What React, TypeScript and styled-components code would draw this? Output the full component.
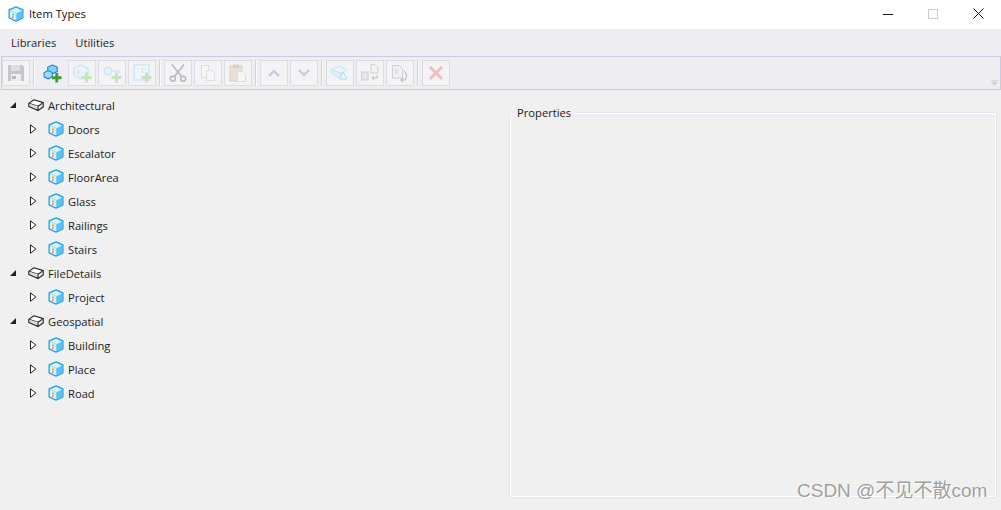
import React from "react";
import styled, { createGlobalStyle } from "styled-components";

const GlobalStyle = createGlobalStyle`
  html, body {
    margin: 0;
    padding: 0;
    background: #f0f0f0;
  }
  body {
    font-family: "Open Sans", "Noto Sans", sans-serif;
    font-size: 11.2px;
    color: #1a1a1a;
  }
`;

const Window = styled.div`
  position: relative;
  width: 1001px;
  height: 510px;
  overflow: hidden;
  display: flex;
  flex-direction: column;
  background: #f0f0f0;
`;

const TitleBar = styled.div`
  height: 29px;
  flex: none;
  box-sizing: border-box;
  padding: 0 0 2px 8px;
  background: #fff;
  display: flex;
  align-items: center;
`;

const TitleText = styled.span`
  margin-left: 5px;
  font-size: 11.2px;
  color: #111;
`;

const WindowButtons = styled.div`
  margin-left: auto;
  display: flex;
  align-items: center;
  height: 100%;
`;

const WindowButton = styled.div`
  width: 45px;
  height: 100%;
  display: flex;
  align-items: center;
  justify-content: center;

  &:last-child {
    width: 46px;
    box-sizing: border-box;
    padding-left: 1px;
  }
`;

const MenuBar = styled.div`
  height: 27px;
  flex: none;
  background: #eeedf2;
  display: flex;
  align-items: center;
  padding-left: 11px;
  gap: 19px;
`;

const MenuItem = styled.span`
  font-size: 11.2px;
  color: #1e1e1e;
`;

const ToolbarRow = styled.div`
  height: 34px;
  flex: none;
  box-sizing: border-box;
  margin-left: 1px;
  background: #eeedf2;
  border: 1px solid #ccc9e0;
  display: flex;
  align-items: center;
  gap: 2px;
  position: relative;
`;

const ToolButton = styled.div<{ $plain?: boolean }>`
  width: 28px;
  height: 26px;
  box-sizing: border-box;
  flex: none;
  display: flex;
  align-items: center;
  justify-content: center;
  background: ${(p) => (p.$plain ? "transparent" : "#f3f3f5")};
  border: 1px solid ${(p) => (p.$plain ? "transparent" : "#dddce6")};
`;

const Separator = styled.div`
  width: 2px;
  height: 26px;
  flex: none;
  margin: 0 1px;
  background: linear-gradient(to right, #d4d2e2 50%, #fafafa 50%);
`;

const Overflow = styled.svg`
  position: absolute;
  right: 2px;
  bottom: 3px;
`;

const Body = styled.div`
  flex: 1;
  display: flex;
  min-height: 0;
`;

const TreePane = styled.div`
  width: 509px;
  flex: none;
  padding-top: 3px;
`;

const TreeRow = styled.div<{ $child?: boolean }>`
  height: 24px;
  display: flex;
  align-items: center;
  padding-left: ${(p) => (p.$child ? 29 : 9)}px;
`;

const Arrow = styled.svg`
  width: 8px;
  height: 10px;
  flex: none;
  margin-right: 11px;
`;

const RowLabel = styled.span`
  margin-left: 4px;
  font-size: 11.2px;
  color: #1a1a1a;
`;

const PropertiesBox = styled.fieldset`
  margin: 22px 0 0 0;
  padding: 0;
  width: 488px;
  height: 386px;
  box-sizing: border-box;
  border: 1px solid #dfe7f0;
  outline: 1px solid #fff;
  outline-offset: -2px;
  border-radius: 3px;
  position: relative;
`;

const PropertiesTitle = styled.legend`
  position: absolute;
  top: -8px;
  left: 4px;
  padding: 0 3px;
  background: #f0f0f0;
  font-size: 11.2px;
  line-height: 16px;
  color: #1a1a1a;
`;

const Watermark = styled.div`
  position: absolute;
  left: 797px;
  top: 479px;
  font-family: "Liberation Sans", "Noto Sans CJK SC", sans-serif;
  font-size: 19px;
  line-height: 24px;
  color: rgba(120, 120, 120, 0.7);
  text-shadow: 1px 1px 1px rgba(255, 255, 255, 0.8);
  white-space: nowrap;
`;

const CubeIcon = ({ size = 16 }: { size?: number }) => (
  <svg width={size} height={size} viewBox="0 0 16 16">
    <path d="M8 .8 14.9 3.9V12L8 15.2 1.1 12V3.9Z" fill="#8fd8f6" stroke="#1d9fe4" strokeWidth="1.2" strokeLinejoin="round" />
    <path d="M8 1.9 13.6 4.4 8 7 2.4 4.4Z" fill="#d8f3fd" />
    <path d="M8.6 7.5 14 5V11.5L8.6 14Z" fill="#5cc3f0" />
    <path d="M2.2 5.2 7.6 7.6V14L2.2 11.5Z" fill="#e9f9fe" />
    <path d="M4 8.2h2" stroke="#39a845" strokeWidth="1" />
    <path d="M4 10h2.4" stroke="#e89a2c" strokeWidth="1" />
    <path d="M4 11.7h1.6" stroke="#d9534f" strokeWidth="1" />
  </svg>
);

const BoxIcon = () => (
  <svg width="16" height="13" viewBox="0 0 16 13">
    <path d="M6 .8 15.2 3.6 10 7.2 .8 4.4Z" fill="#fff" stroke="#222" strokeWidth="1.1" strokeLinejoin="round" />
    <path d="M.8 4.4V7.4L10 11.6V7.2M10 11.6 15.2 8V3.6" fill="#ddd" stroke="#222" strokeWidth="1.1" strokeLinejoin="round" />
  </svg>
);

const Plus = ({ color = "#c6e2c0" }: { color?: string }) => (
  <path d="M13 8.5h3v3.5h3.5v3H16v3.5h-3V15H9.5v-3H13Z" transform="translate(0 1)" fill={color} />
);

const icons: Record<string, React.ReactNode> = {
  save: (
    <svg width="18" height="18" viewBox="0 0 18 18">
      <path d="M1 1h14l2 2v14H1Z" fill="#c6c6c8" />
      <rect x="4" y="1" width="9" height="6" fill="#dedee0" />
      <rect x="4" y="10" width="10" height="7" fill="#efeff0" />
      <rect x="5" y="12" width="4" height="3" fill="#b8b8ba" />
    </svg>
  ),
  addLibrary: (
    <svg width="19" height="19" viewBox="0 0 20 20">
      <path d="M10 1 15 3.2V8L10 10.2 5 8V3.2Z" fill="#7fd0f5" stroke="#1f7fd0" strokeWidth="1.1" />
      <path d="M5.5 7 9.8 9V13.5L5.5 15.6 1.2 13.5V9Z" fill="#9adcf8" stroke="#1f7fd0" strokeWidth="1.1" />
      <Plus color="#3f9b35" />
    </svg>
  ),
  addItem: (
    <svg width="20" height="20" viewBox="0 0 20 20">
      <path d="M9 2 16 5V12L9 16 2 12V5Z" fill="#e8f4fa" stroke="#c6e4f3" strokeWidth="1.2" />
      <path d="M5 8h3M5 10h3" stroke="#e8d4c0" />
      <Plus />
    </svg>
  ),
  addKey: (
    <svg width="20" height="20" viewBox="0 0 20 20">
      <circle cx="6" cy="8" r="3.6" fill="#e8f4fa" stroke="#c6e4f3" strokeWidth="1.2" />
      <path d="M9.6 8H17V11" fill="none" stroke="#c6e4f3" strokeWidth="1.2" />
      <Plus />
    </svg>
  ),
  addList: (
    <svg width="20" height="20" viewBox="0 0 20 20">
      <rect x="2" y="2" width="15" height="15" fill="#eef6fb" stroke="#c6e4f3" strokeWidth="1.2" />
      <path d="M5 6h2M9 6h5M5 9h2M9 9h3" stroke="#d0e2c2" />
      <Plus />
    </svg>
  ),
  cut: (
    <svg width="20" height="20" viewBox="0 0 20 20" fill="none" stroke="#b6b6ba" strokeWidth="1.4">
      <path d="M4 1.5 13.5 13.5M16 1.5 6.5 13.5" />
      <circle cx="4.8" cy="15.7" r="2.5" />
      <circle cx="15.2" cy="15.7" r="2.5" />
    </svg>
  ),
  copy: (
    <svg width="18" height="18" viewBox="0 0 18 18" fill="#f7f7f8" stroke="#dedee0">
      <path d="M2.5 1.5h7v12h-7Z" />
      <path d="M7.5 6.5h5l3 3v7h-8Z" />
    </svg>
  ),
  paste: (
    <svg width="20" height="20" viewBox="0 0 20 20">
      <rect x="2" y="3" width="12" height="15" fill="#e8e0d2" stroke="#dcd1be" />
      <rect x="5" y="1.5" width="6" height="3.5" fill="#d2d2d2" />
      <path d="M9.5 8.5h5l3 3v7h-8Z" fill="#f5f5f6" stroke="#dedee0" />
    </svg>
  ),
  up: (
    <svg width="14" height="10" viewBox="0 0 14 10" fill="none" stroke="#c0cae0" strokeWidth="2.2">
      <path d="M2 8 7 3l5 5" />
    </svg>
  ),
  down: (
    <svg width="14" height="10" viewBox="0 0 14 10" fill="none" stroke="#c0cae0" strokeWidth="2.2">
      <path d="M2 2l5 5 5-5" />
    </svg>
  ),
  importFile: (
    <svg width="20" height="18" viewBox="0 0 20 18">
      <path d="M1 6 9 2l8 4-6 3Z" fill="#e9f4fb" stroke="#cce5f4" />
      <path d="M1 6v3l10 6V9Z" fill="#dceef8" stroke="#cce5f4" />
      <path d="M13 8l4 7h-7Z" fill="#f0f8fc" stroke="#b5daf0" />
    </svg>
  ),
  convert: (
    <svg width="20" height="20" viewBox="0 0 20 20">
      <path d="M11 1.5h4l3 3V10h-7Z" fill="#f2f2f3" stroke="#d0d0d3" />
      <rect x="1.5" y="9" width="6.5" height="8" fill="#dfe7f0" stroke="#d0d0d3" />
      <path d="M17 12v3h-5M14 13l-2 2 2 2" fill="none" stroke="#bfbfc2" />
    </svg>
  ),
  refresh: (
    <svg width="20" height="20" viewBox="0 0 20 20">
      <path d="M2.5 2.5h7l3 3V15h-10Z" fill="#f2f2f3" stroke="#d0d0d3" />
      <rect x="4.5" y="6" width="4" height="5" fill="#d6e4f3" />
      <path d="M14 8c3 2 3 6 1 9h-4M13 15l-2 2 2 2" fill="none" stroke="#bfbfc2" strokeWidth="1.2" />
    </svg>
  ),
  remove: (
    <svg width="16" height="16" viewBox="0 0 16 16" fill="none" stroke="#ecc0c0" strokeWidth="3">
      <path d="M2 2 14 14M14 2 2 14" />
    </svg>
  ),
};

const toolGroups: { name: string; plain?: boolean }[][] = [
  [{ name: "save" }],
  [{ name: "addLibrary", plain: true }, { name: "addItem" }, { name: "addKey" }, { name: "addList" }],
  [{ name: "cut" }, { name: "copy" }, { name: "paste" }],
  [{ name: "up" }, { name: "down" }],
  [{ name: "importFile" }, { name: "convert" }, { name: "refresh" }],
  [{ name: "remove" }],
];

const tree = [
  { name: "Architectural", items: ["Doors", "Escalator", "FloorArea", "Glass", "Railings", "Stairs"] },
  { name: "FileDetails", items: ["Project"] },
  { name: "Geospatial", items: ["Building", "Place", "Road"] },
];

const App = () => {
  return (
    <Window>
      <GlobalStyle />
      <TitleBar>
        <CubeIcon />
        <TitleText>Item Types</TitleText>
        <WindowButtons>
          <WindowButton>
            <svg width="10" height="10" viewBox="0 0 10 10">
              <path d="M0 5.5h10" stroke="#111" />
            </svg>
          </WindowButton>
          <WindowButton>
            <svg width="10" height="10" viewBox="0 0 10 10">
              <rect x=".5" y=".5" width="9" height="9" fill="none" stroke="#ccc" />
            </svg>
          </WindowButton>
          <WindowButton>
            <svg width="11" height="11" viewBox="0 0 11 11">
              <path d="M.5.5l10 10M10.5.5l-10 10" stroke="#111" />
            </svg>
          </WindowButton>
        </WindowButtons>
      </TitleBar>
      <MenuBar>
        <MenuItem>Libraries</MenuItem>
        <MenuItem>Utilities</MenuItem>
      </MenuBar>
      <ToolbarRow>
        {toolGroups.map((group, i) => (
          <React.Fragment key={i}>
            {i > 0 && <Separator />}
            {group.map((tool) => (
              <ToolButton key={tool.name} $plain={tool.plain}>
                {icons[tool.name]}
              </ToolButton>
            ))}
          </React.Fragment>
        ))}
        <Overflow width="7" height="6" viewBox="0 0 8 7">
          <path d="M0 0h8v1H0ZM0 2h8L4 7Z" fill="#d2d2d6" />
        </Overflow>
      </ToolbarRow>
      <Body>
        <TreePane>
          {tree.map((group) => (
            <React.Fragment key={group.name}>
              <TreeRow>
                <Arrow viewBox="0 0 8 10">
                  <path d="M7 2v6H1Z" fill="#222" />
                </Arrow>
                <BoxIcon />
                <RowLabel>{group.name}</RowLabel>
              </TreeRow>
              {group.items.map((item) => (
                <TreeRow $child key={item}>
                  <Arrow viewBox="0 0 8 10">
                    <path d="M1.5.8 6.8 5 1.5 9.2Z" fill="#fff" stroke="#222" />
                  </Arrow>
                  <CubeIcon />
                  <RowLabel>{item}</RowLabel>
                </TreeRow>
              ))}
            </React.Fragment>
          ))}
        </TreePane>
        <PropertiesBox>
          <PropertiesTitle>Properties</PropertiesTitle>
        </PropertiesBox>
      </Body>
      <Watermark>CSDN @不见不散com</Watermark>
    </Window>
  );
};

export default App;
